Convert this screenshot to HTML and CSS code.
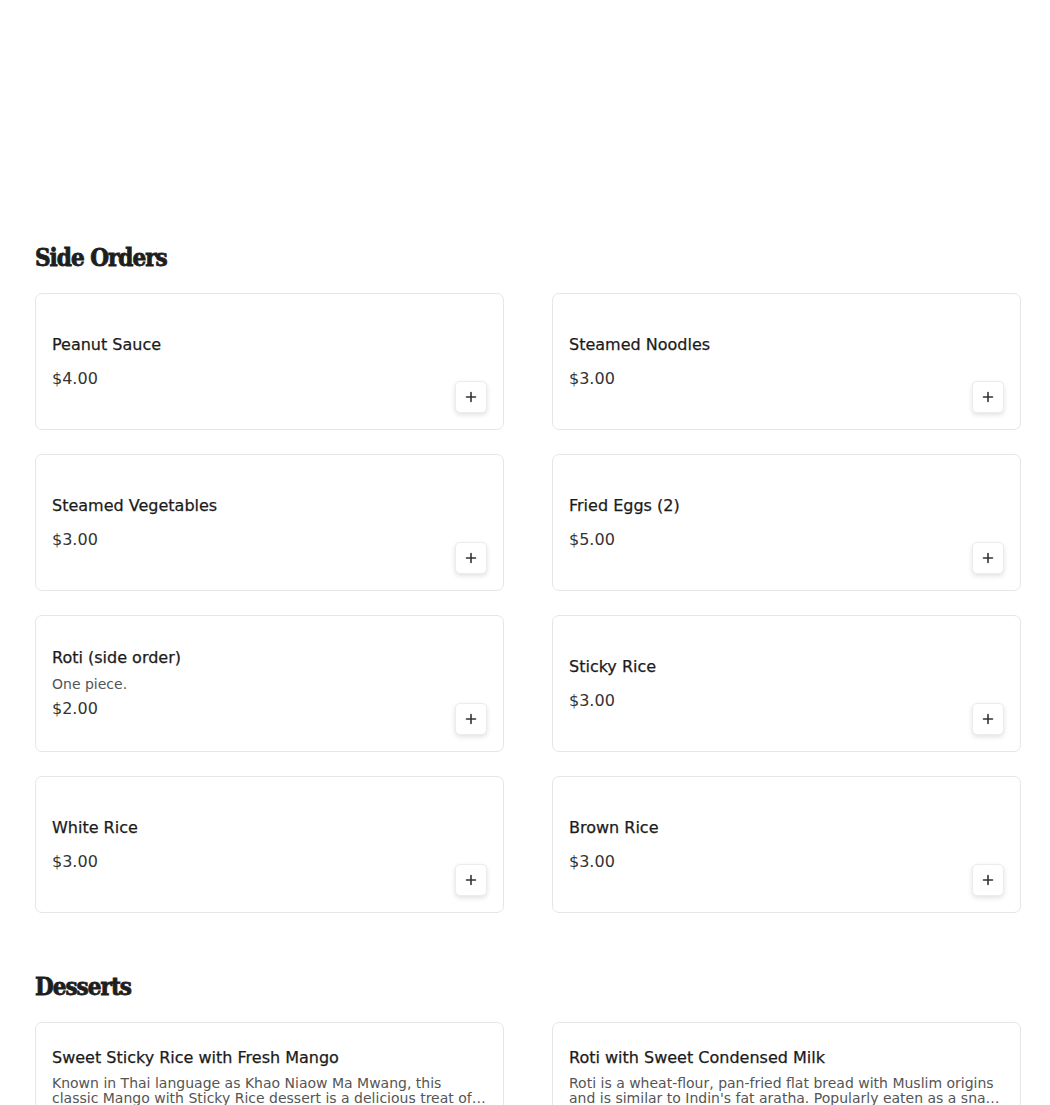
FILE: index.html
```
<!DOCTYPE html>
<html lang="en">
<head>
<meta charset="utf-8">
<title>Menu</title>
<link rel="stylesheet" href="styles.css">
</head>
<body>
<main class="menu">
  <section class="section section-first">
    <h2 class="section-title">Side Orders</h2>
    <div class="grid">
      <div class="card"><div class="info"><div class="name">Peanut Sauce</div><div class="price">$4.00</div></div><button class="add" aria-label="Add"><svg viewBox="0 0 12 12" width="12" height="12"><path d="M6 1.5v9M1.5 6h9" stroke="#333" stroke-width="1.6" stroke-linecap="round"/></svg></button></div>
      <div class="card"><div class="info"><div class="name">Steamed Noodles</div><div class="price">$3.00</div></div><button class="add" aria-label="Add"><svg viewBox="0 0 12 12" width="12" height="12"><path d="M6 1.5v9M1.5 6h9" stroke="#333" stroke-width="1.6" stroke-linecap="round"/></svg></button></div>
      <div class="card"><div class="info"><div class="name">Steamed Vegetables</div><div class="price">$3.00</div></div><button class="add" aria-label="Add"><svg viewBox="0 0 12 12" width="12" height="12"><path d="M6 1.5v9M1.5 6h9" stroke="#333" stroke-width="1.6" stroke-linecap="round"/></svg></button></div>
      <div class="card"><div class="info"><div class="name">Fried Eggs (2)</div><div class="price">$5.00</div></div><button class="add" aria-label="Add"><svg viewBox="0 0 12 12" width="12" height="12"><path d="M6 1.5v9M1.5 6h9" stroke="#333" stroke-width="1.6" stroke-linecap="round"/></svg></button></div>
      <div class="card"><div class="info"><div class="name">Roti (side order)</div><div class="desc">One piece.</div><div class="price">$2.00</div></div><button class="add" aria-label="Add"><svg viewBox="0 0 12 12" width="12" height="12"><path d="M6 1.5v9M1.5 6h9" stroke="#333" stroke-width="1.6" stroke-linecap="round"/></svg></button></div>
      <div class="card"><div class="info"><div class="name">Sticky Rice</div><div class="price">$3.00</div></div><button class="add" aria-label="Add"><svg viewBox="0 0 12 12" width="12" height="12"><path d="M6 1.5v9M1.5 6h9" stroke="#333" stroke-width="1.6" stroke-linecap="round"/></svg></button></div>
      <div class="card"><div class="info"><div class="name">White Rice</div><div class="price">$3.00</div></div><button class="add" aria-label="Add"><svg viewBox="0 0 12 12" width="12" height="12"><path d="M6 1.5v9M1.5 6h9" stroke="#333" stroke-width="1.6" stroke-linecap="round"/></svg></button></div>
      <div class="card"><div class="info"><div class="name">Brown Rice</div><div class="price">$3.00</div></div><button class="add" aria-label="Add"><svg viewBox="0 0 12 12" width="12" height="12"><path d="M6 1.5v9M1.5 6h9" stroke="#333" stroke-width="1.6" stroke-linecap="round"/></svg></button></div>
    </div>
  </section>
  <section class="section">
    <h2 class="section-title">Desserts</h2>
    <div class="grid">
      <div class="card"><div class="info"><div class="name">Sweet Sticky Rice with Fresh Mango</div><div class="desc desc-clamp">Known in Thai language as Khao Niaow Ma Mwang, this classic Mango with Sticky Rice dessert is a delicious treat of sweet glutinous rice, fresh ripe mango and creamy coconut milk.</div><div class="price">$9.00</div></div><button class="add" aria-label="Add"><svg viewBox="0 0 12 12" width="12" height="12"><path d="M6 1.5v9M1.5 6h9" stroke="#333" stroke-width="1.6" stroke-linecap="round"/></svg></button></div>
      <div class="card"><div class="info"><div class="name">Roti with Sweet Condensed Milk</div><div class="desc desc-clamp">Roti is a wheat-flour, pan-fried flat bread with Muslim origins and is similar to Indin's fat aratha. Popularly eaten as a snack with sweet condensed milk drizzled over.</div><div class="price">$6.00</div></div><button class="add" aria-label="Add"><svg viewBox="0 0 12 12" width="12" height="12"><path d="M6 1.5v9M1.5 6h9" stroke="#333" stroke-width="1.6" stroke-linecap="round"/></svg></button></div>
    </div>
  </section>
</main>
</body>
</html>
```
FILE: styles.css
```
* { box-sizing: border-box; }
html, body { margin: 0; padding: 0; background: #fff; }
body {
  font-family: "DejaVu Sans", "Noto Sans", sans-serif;
  color: #1c1c1c;
}
.menu {
  padding: 0 29px 0 35px;
}
.section-first { padding-top: 240px; }
.section { padding-bottom: 56px; }
.section-title {
  margin: 0 0 17px 0;
  height: 36px;
  line-height: 36px;
  font-family: "DejaVu Serif Condensed", "DejaVu Serif", serif;
  font-weight: 700;
  font-size: 24px;
  letter-spacing: -1px;
  -webkit-text-stroke: 0.8px #1e1e1e;
  color: #1e1e1e;
}
.grid {
  display: grid;
  grid-template-columns: 1fr 1fr;
  column-gap: 48px;
  row-gap: 24px;
}
.card {
  display: grid;
  grid-template-columns: 1fr;
  grid-template-rows: 1fr;
  min-height: 137px;
  border: 1px solid #e6e6e6;
  border-radius: 7px;
  padding: 16px;
  background: #fff;
}
.info {
  grid-area: 1 / 1;
  align-self: center;
  display: flex;
  flex-direction: column;
  min-width: 0;
}
.name {
  font-size: 16px;
  line-height: 20px;
  color: #1b1b1b;
  -webkit-text-stroke: 0.25px #1b1b1b;
}
.desc {
  margin-top: 8px;
  font-size: 14px;
  line-height: 16px;
  color: #555;
}
.desc-clamp {
  line-height: 15px;
  display: -webkit-box;
  -webkit-line-clamp: 2;
  -webkit-box-orient: vertical;
  overflow: hidden;
}
.price {
  margin-top: 14px;
  font-size: 16px;
  line-height: 20px;
  color: #333;
}
.desc + .price { margin-top: 7px; }
.add {
  grid-area: 1 / 1;
  justify-self: end;
  align-self: end;
  width: 32px;
  height: 32px;
  padding: 0;
  border: 1px solid #ececec;
  border-radius: 5px;
  background: #fff;
  box-shadow: 0 2px 5px rgba(0,0,0,0.12);
  display: flex;
  align-items: center;
  justify-content: center;
  cursor: pointer;
}
.add svg { display: block; }
```
